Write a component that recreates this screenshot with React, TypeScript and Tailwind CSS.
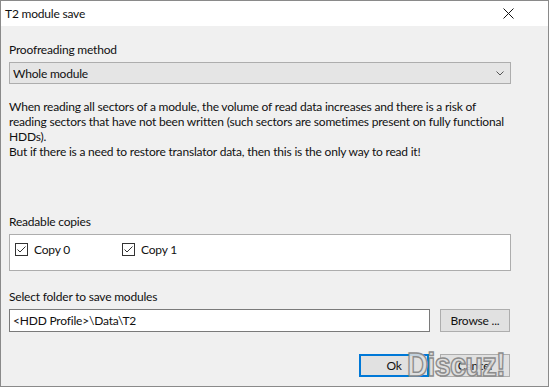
import React from 'react';

const font = "font-['Segoe_UI','Lato',sans-serif]";

const CheckBox: React.FC<{ label: string }> = ({ label }) => (
    <label className="w-[107px] flex items-center gap-[6px]">
        <span className="w-[13px] h-[13px] border border-[#333333] bg-white flex items-center justify-center">
            <svg width="11" height="11" viewBox="0 0 11 11" fill="none">
                <path d="M1.5 5.5 L4 8 L9.5 2.5" stroke="#333333" strokeWidth="1" />
            </svg>
        </span>
        <span>{label}</span>
    </label>
);

export default function App() {
    return (
        <div className={`w-[549px] h-[388px] overflow-hidden bg-white ${font} text-[12px] tracking-[-0.2px] text-[#111] leading-[15px] whitespace-nowrap`}>
            <div className="w-[549px] h-[387px] border border-[#8a8a8a] flex flex-col relative overflow-hidden">
                {/* title bar */}
                <div className="h-[25px] shrink-0 bg-white flex items-center justify-between pl-[4px] pr-[34px]">
                    <span>T2 module save</span>
                    <svg width="11" height="11" viewBox="0 0 11 11">
                        <path d="M0.5 0.5 L10.5 10.5 M10.5 0.5 L0.5 10.5" stroke="#111" strokeWidth="1" />
                    </svg>
                </div>

                <div className="flex-1 bg-[#f0f0f0] px-[8px] pt-[16px]">
                    <div className="h-[16px]">Proofreading method</div>
                    <div className="mt-[4px] h-[22px] w-[502px] bg-[#e5e5e5] border border-[#adadad] flex items-center justify-between pl-[3px] pr-[6px]">
                        <span>Whole module</span>
                        <svg width="8" height="5" viewBox="0 0 8 5" fill="none">
                            <path d="M0.5 0.5 L4 4 L7.5 0.5" stroke="#555" strokeWidth="1" />
                        </svg>
                    </div>

                    <p className="mt-[15px] w-[510px]">
                        When reading all sectors of a module, the volume of read data increases and there is a risk of<br />
                        reading sectors that have not been written (such sectors are sometimes present on fully functional<br />
                        HDDs).<br />
                        But if there is a need to restore translator data, then this is the only way to read it!
                    </p>

                    <div className="mt-[55px] h-[16px]">Readable copies</div>
                    <div className="mt-[4px] h-[37px] w-[502px] bg-white border border-[#adadad] flex items-start pt-[7px] pl-[5px]">
                        <CheckBox label="Copy 0" />
                        <CheckBox label="Copy 1" />
                    </div>

                    <div className="mt-[18px] h-[16px]">Select folder to save modules</div>
                    <div className="mt-[4px] flex items-center gap-[10px]">
                        <div className="h-[23px] w-[421px] bg-white border border-[#7a7a7a] flex items-center pl-[3px]">
                            &lt;HDD Profile&gt;\Data\T2
                        </div>
                        <button className="h-[23px] w-[70px] bg-[#e1e1e1] border border-[#adadad] flex items-center justify-center -mt-[1px]">
                            Browse ...
                        </button>
                    </div>

                    <div className="mt-[22px] flex justify-end gap-[11px] pr-[30px]">
                        <button className="h-[23px] w-[70px] bg-[#e1e1e1] border-2 border-[#0078d7] flex items-center justify-center">
                            Ok
                        </button>
                        <button className="h-[23px] w-[70px] bg-[#e1e1e1] border border-[#adadad] flex items-center justify-center">
                            Cancel
                        </button>
                    </div>
                </div>

                {/* watermark */}
                <span className="absolute left-[406px] top-[343px] text-[34px] leading-[40px] font-bold tracking-[-1px] text-[#dedede]/90 [-webkit-text-stroke:1.5px_#8c8c8c] font-['Liberation_Sans',sans-serif] scale-x-[0.86] origin-left">
                    Discuz!
                </span>
            </div>
        </div>
    );
}
